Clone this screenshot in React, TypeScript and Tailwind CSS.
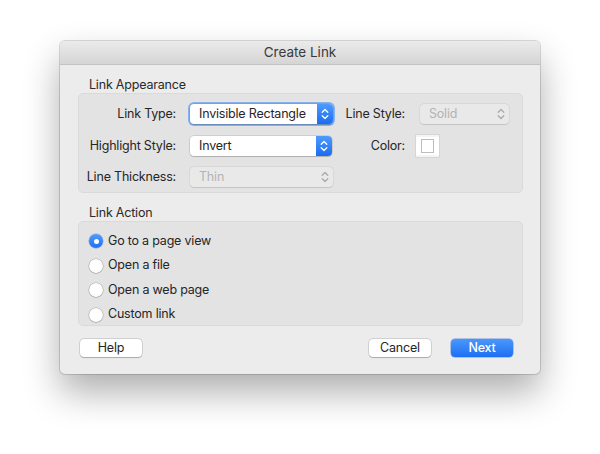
import React from 'react'

const font = { fontFamily: 'Inter, "Liberation Sans", Arial, sans-serif' }

function Chevrons({ color }: { color: string }) {
  return (
    <svg width="8" height="12" viewBox="0 0 8 12" fill="none">
      <path d="M1.2 4.3 L4 1.5 L6.8 4.3" stroke={color} strokeWidth="1.3" strokeLinecap="round" strokeLinejoin="round" />
      <path d="M1.2 7.7 L4 10.5 L6.8 7.7" stroke={color} strokeWidth="1.3" strokeLinecap="round" strokeLinejoin="round" />
    </svg>
  )
}

function Popup({
  value,
  width,
  disabled,
  focused,
}: {
  value: string
  width: string
  disabled?: boolean
  focused?: boolean
}) {
  const inner = (
    <div
      className={
        'flex h-[20px] items-stretch rounded-[4px] overflow-hidden ' +
        (disabled
          ? 'bg-[#e9e9e9] shadow-[0_0_0_0.5px_rgba(0,0,0,0.08),0_0.5px_1px_rgba(0,0,0,0.1)]'
          : 'bg-white shadow-[0_0_0_0.5px_rgba(0,0,0,0.18),0_1px_1px_rgba(0,0,0,0.15)]') +
        ' ' +
        width
      }
    >
      <span
        className={
          'flex-1 pl-[9px] leading-[20px] whitespace-nowrap ' + (disabled ? 'text-[#b4b4b4]' : 'text-[#262626]')
        }
      >
        {value}
      </span>
      {disabled ? (
        <span className="flex w-[16px] items-center justify-center">
          <Chevrons color="#a9a9a9" />
        </span>
      ) : (
        <span className="flex w-[16px] items-center justify-center bg-gradient-to-b from-[#4e9bfb] to-[#1b6cf2]">
          <Chevrons color="#ffffff" />
        </span>
      )}
    </div>
  )
  if (focused) {
    return <div className="rounded-[6px] p-[2px] bg-[#86b2f0] -m-[2px]">{inner}</div>
  }
  return inner
}

function Radio({ label, checked }: { label: string; checked?: boolean }) {
  return (
    <div className="flex h-[24.5px] items-center">
      {checked ? (
        <span className="flex h-[14px] w-[14px] items-center justify-center rounded-full bg-gradient-to-b from-[#4f9cfb] to-[#1e6ff3] shadow-[0_0_0_0.5px_rgba(0,60,200,0.4)]">
          <span className="h-[5px] w-[5px] rounded-full bg-white" />
        </span>
      ) : (
        <span className="h-[14px] w-[14px] rounded-full bg-white shadow-[0_0_0_0.5px_rgba(0,0,0,0.25),0_0.5px_1px_rgba(0,0,0,0.2)]" />
      )}
      <span className="ml-[5px] text-[#262626]">{label}</span>
    </div>
  )
}

function Button({ label, primary }: { label: string; primary?: boolean }) {
  return (
    <div
      className={
        'flex h-[18px] w-[62px] items-center justify-center rounded-[4px] ' +
        (primary
          ? 'bg-gradient-to-b from-[#4a97fb] to-[#1c6ff4] text-white font-medium shadow-[0_0_0_0.5px_rgba(0,70,210,0.5)]'
          : 'bg-white text-[#262626] shadow-[0_0_0_0.5px_rgba(0,0,0,0.2),0_0.5px_1px_rgba(0,0,0,0.2)]')
      }
    >
      {label}
    </div>
  )
}

export default function App() {
  return (
    <div className="h-[454px] w-[600px] bg-white pt-[41px] text-[12.5px] tracking-[-0.2px]" style={font}>
      <div className="mx-auto w-[480px] rounded-[5px] bg-[#ececec] shadow-[0_0_0_1px_rgba(0,0,0,0.14),0_18px_36px_rgba(0,0,0,0.32)] overflow-hidden">
        {/* title bar */}
        <div className="flex h-[24px] items-center justify-center border-b border-[#c3c3c3] bg-gradient-to-b from-[#ebebeb] to-[#d5d5d5] text-[13.5px] tracking-normal text-[#3a3a3a]">
          Create Link
        </div>

        <div className="px-[18px] pr-[17px] pt-[12px] pb-[17px]">
          <div className="pl-[11px] leading-[16px] text-[#2a2a2a]">Link Appearance</div>
          <div className="h-[100px] rounded-[5px] border border-[#dadada] bg-[#e3e3e3] pt-[10px]">
            <div className="flex h-[20px] items-center">
              <span className="w-[97px] text-right text-[#262626]">Link Type:</span>
              <span className="ml-[14px]">
                <Popup value="Invisible Rectangle" width="w-[143px]" focused />
              </span>
              <span className="w-[72px] text-right text-[#262626]">Line Style:</span>
              <span className="ml-[15px]">
                <Popup value="Solid" width="w-[89px]" disabled />
              </span>
            </div>
            <div className="mt-[12px] flex h-[20px] items-center">
              <span className="w-[97px] text-right text-[#262626]">Highlight Style:</span>
              <span className="ml-[14px]">
                <Popup value="Invert" width="w-[142px]" />
              </span>
              <span className="w-[73px] text-right text-[#262626]">Color:</span>
              <span className="ml-[11px] flex h-[22px] w-[23px] items-center justify-center border-y-2 border-[#f4f4f4] bg-white shadow-[0_0_0_0.5px_rgba(0,0,0,0.12)]">
                <span className="h-[14px] w-[13px] border border-[#bdbdbd] bg-white" />
              </span>
            </div>
            <div className="mt-[11px] flex h-[20px] items-center">
              <span className="w-[97px] text-right text-[#262626]">Line Thickness:</span>
              <span className="ml-[14px]">
                <Popup value="Thin" width="w-[143px]" disabled />
              </span>
            </div>
          </div>

          <div className="mt-[12px] pl-[11px] leading-[16px] text-[#2a2a2a]">Link Action</div>
          <div className="h-[105px] rounded-[5px] border border-[#dadada] bg-[#e3e3e3] pl-[10px] pt-[7px]">
            <Radio label="Go to a page view" checked />
            <Radio label="Open a file" />
            <Radio label="Open a web page" />
            <Radio label="Custom link" />
          </div>

          <div className="mt-[13px] flex items-center pl-[2px] pr-[10px]">
            <Button label="Help" />
            <div className="flex-1" />
            <Button label="Cancel" />
            <div className="w-[20px]" />
            <Button label="Next" primary />
          </div>
        </div>
      </div>
    </div>
  )
}
